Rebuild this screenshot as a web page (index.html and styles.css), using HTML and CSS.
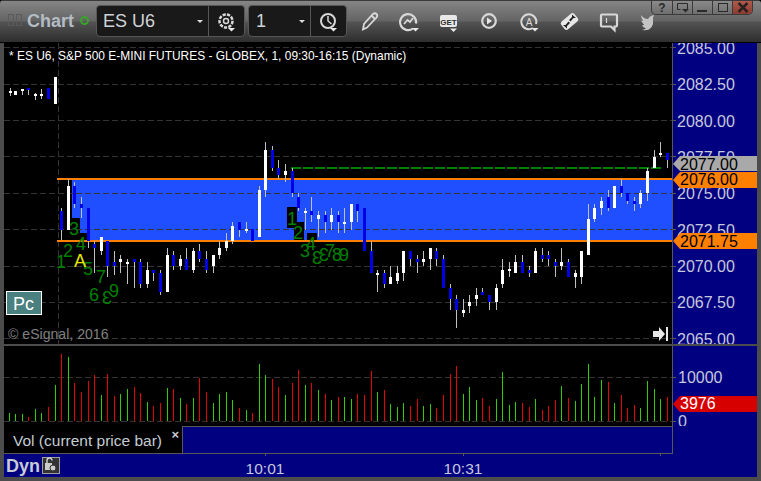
FILE: index.html
```html
<!DOCTYPE html>
<html lang="en">
<head>
<meta charset="utf-8">
<title>Chart</title>
<link rel="stylesheet" href="styles.css">
</head>
<body>
<div class="window">
  <header class="titlebar">
    <div class="handle"><span></span><span></span></div>
    <div class="app-name">Chart</div>
    <div class="status-dot"></div>
    <div class="combo combo-symbol">
      <div class="combo-value">ES U6<i class="caret"></i></div>
      <div class="combo-icon">
        <svg width="36" height="30" viewBox="0 0 36 30"><g class="ic-line"><circle cx="17" cy="15" r="6.5" stroke-width="2.5" stroke-dasharray="3.2 1.2"/><circle cx="17" cy="15" r="2.5" stroke-width="1.5"/></g><path class="ic-fill" d="M19 22h7l-3.500 3.500z"/></svg>
      </div>
    </div>
    <div class="combo combo-interval">
      <div class="combo-value">1<i class="caret"></i></div>
      <div class="combo-icon">
        <svg width="36" height="30" viewBox="0 0 36 30"><g class="ic-line"><circle cx="17" cy="15" r="7" stroke-width="2"/><path d="M17 10v5l3.500 3" stroke-width="1.500"/></g><path class="ic-fill" d="M19 22h7l-3.500 3.500z"/></svg>
      </div>
    </div>
    <div class="tools">
      <svg class="tool" viewBox="0 0 40 30"><path class="ic-line" stroke-width="1.800" d="M14 23.500l1-5.500 9-10q2-1.500 3.500 0t0 3.500l-9.500 10z M22.500 9.500l3.500 3.500"/></svg>
      <svg class="tool" viewBox="0 0 40 30"><path class="ic-line" stroke-width="2.200" d="M24 22.500a8 8 0 1 1 3-5"/><path class="ic-line" stroke-width="1.800" d="M15 18l3.500-4 2.500 2 3-4"/><path class="ic-fill" d="M23 22h7l-3.500 3.500z"/></svg>
      <svg class="tool" viewBox="0 0 40 30"><rect class="ic-fill" x="11" y="9" width="17" height="12" rx="2"/><text class="get-text" x="19.500" y="18.500">GET</text><path class="ic-fill" d="M21 22.500h7l-3.500 3.500z"/></svg>
      <svg class="tool" viewBox="0 0 40 30"><circle class="ic-line" stroke-width="2.200" cx="20" cy="15" r="6.800"/><path class="ic-fill" d="M18 11.500l5 3.500-5 3.500z"/></svg>
      <svg class="tool" viewBox="0 0 40 30"><path class="ic-line" stroke-width="2" d="M24 22a7.500 7.500 0 1 1 3-4"/><text class="a-text" x="20" y="19.500">A</text><path class="ic-fill" d="M22.500 22h7l-3.500 3.500z"/></svg>
      <svg class="tool" viewBox="0 0 40 30"><rect class="ic-fill" x="12" y="10.500" width="17" height="10" rx="2.500" transform="rotate(-40 20.500 15.500)"/><path class="ic-dark" d="M23 8.500l4 3.500h-2.500l-3 3.500-1.500-1.500 3-3zM18 22.500l-4-3.500h2.500l3-3.500 1.500 1.500-3 3z"/></svg>
      <svg class="tool" viewBox="0 0 40 30"><path class="ic-line" stroke-width="2.200" d="M13 8.500h14q1 0 1 1v10q0 1-1 1h-1.500v3.500l-3.500-3.500h-9q-1 0-1-1v-10q0-1 1-1z"/><path class="ic-line" stroke-width="1.200" d="M17.500 12v5"/></svg>
      <svg class="tool tool-bird" viewBox="0 0 40 30"><path class="ic-bird" d="M15 9q3 4 7 4 1-2 3-3l3-1-1 3v6q-1 4-4 5.500-3 1-7 .5 3-.500 4-2-3 0-4-3 2 .500 2-.500-2-2-3-4 1 .500 2 0-2-2-2-5.500z"/></svg>
    </div>
    <div class="win-buttons">
      <div class="win-btn">?</div>
      <div class="win-btn"><svg width="14" height="11" viewBox="0 0 14 11"><path class="wb-line" d="M1.500 1.500h10v6M1.500 1.500v6h3"/><path class="wb-fill" d="M6 7h7l-3.500 3.500z"/></svg></div>
      <div class="win-btn"><svg width="14" height="11" viewBox="0 0 14 11"><path class="wb-fill" d="M1 8h10v2H1z"/></svg></div>
      <div class="win-btn"><svg width="14" height="11" viewBox="0 0 14 11"><rect class="wb-line" x="2.500" y="1.500" width="9" height="8"/></svg></div>
      <div class="win-btn win-close"><svg width="14" height="11" viewBox="0 0 14 11"><path class="wb-x" d="M2.500 1l9 9M11.500 1l-9 9"/></svg></div>
    </div>
  </header>

  <svg class="price-pane" width="753" height="301" viewBox="4 43 753 301">
    <rect class="plot-bg" x="4" y="43" width="668" height="301"/>
    <rect class="axis-bg" x="673" y="43" width="84" height="301"/>
    <rect class="band" x="58" y="178" width="614" height="64"/>
    <path class="mask" d="M58 180h14v38h8v15h7v7H58z"/>
    <path class="grid" d="M4 47.500H672M4 84.500H672M4 120.500H672M4 156.500H672M4 193.500H672M4 229.500H672M4 266.500H672M4 302.500H672M4 338.500H672"/>
    <path class="grid" d="M58.500 43V344"/>
    <path class="band-edge" d="M57 179H672M57 241H672"/>
    <path class="target" d="M291 168H661"/>
    <path class="wick" d="M10.500 88V96M15.500 91V95M22.500 89V95M28.500 88V95M35.500 93V100M41.500 89V99M48.500 88V99M55.500 77V104M61.500 208V240M68.500 179V230M74.500 182V208M81.500 197V218M88.500 208V248M94.500 241V273M101.500 237V255M107.500 241V277M114.500 251V275M120.500 255V273M127.500 259V284M134.500 259V288M140.500 259V288M147.500 262V288M153.500 270V281M160.500 270V295M167.500 248V292M173.500 251V270M180.500 255V270M186.500 248V270M193.500 248V273M199.500 244V262M206.500 251V273M213.500 255V273M219.500 241V259M226.500 233V251M232.500 222V244M239.500 222V237M246.500 222V233M252.500 229V241M259.500 186V237M265.500 142V197M272.500 146V171M278.500 160V179M285.500 164V182M292.500 168V197M298.500 193V211M305.500 208V230M311.500 197V222M318.500 211V237M325.500 211V233M331.500 208V230M338.500 211V233M344.500 208V233M351.500 204V230M357.500 204V222M364.500 208V251M371.500 241V273M377.500 270V292M384.500 270V288M390.500 266V284M397.500 266V284M403.500 251V281M410.500 251V266M417.500 255V273M423.500 251V266M430.500 248V270M436.500 248V266M443.500 255V288M450.500 284V310M456.500 295V328M463.500 299V317M469.500 295V313M476.500 288V306M482.500 288V295M489.500 295V310M496.500 284V310M502.500 259V288M509.500 262V277M515.500 255V273M522.500 255V273M529.500 266V277M535.500 248V273M542.500 248V262M548.500 251V266M555.500 259V277M561.500 248V270M568.500 259V277M575.500 270V288M581.500 251V284M588.500 204V255M594.500 204V222M601.500 197V215M608.500 190V211M614.500 186V208M621.500 179V197M627.500 193V204M634.500 197V211M640.500 190V208M647.500 168V201M654.500 150V168M660.500 142V157M667.500 153V168"/>
    <path class="body-white" d="M10.500 91V93M15.500 91V95M22.500 89V91M35.500 94V96M41.500 94V96M55.500 77V104M68.500 186V230M101.500 237V251M120.500 259V262M127.500 262V264M147.500 270V284M167.500 255V292M180.500 259V266M193.500 251V270M213.500 255V266M219.500 248V255M226.500 241V248M232.500 226V241M246.500 229V231M259.500 190V237M265.500 150V190M285.500 171V175M305.500 211V213M318.500 215V219M331.500 215V222M344.500 222V224M351.500 204V222M377.500 273V275M390.500 277V284M397.500 273V281M403.500 251V273M423.500 259V262M430.500 248V259M463.500 310V313M469.500 302V306M476.500 295V299M496.500 288V302M502.500 270V284M509.500 269V271M515.500 262V273M535.500 251V273M561.500 262V266M575.500 273V277M581.500 251V277M588.500 219V255M594.500 208V219M601.500 201V208M614.500 186V208M640.500 193V204M647.500 171V193M654.500 157V168M660.500 153V155"/>
    <path class="body-blue" d="M28.500 88V90M48.500 88V99M61.500 211V230M74.500 186V204M81.500 204V208M88.500 208V241M94.500 244V248M107.500 241V266M114.500 262V266M134.500 259V262M140.500 262V284M153.500 270V273M160.500 273V292M173.500 255V266M186.500 259V270M199.500 251V259M206.500 259V270M239.500 222V230M252.500 229V241M272.500 150V168M278.500 168V175M292.500 171V193M298.500 197V208M311.500 211V215M325.500 215V222M338.500 215V222M357.500 204V211M364.500 208V251M371.500 251V273M384.500 273V284M410.500 251V259M417.500 259V262M436.500 251V259M443.500 259V288M450.500 288V299M456.500 299V310M482.500 292V295M489.500 295V302M522.500 262V273M529.500 270V273M542.500 255V259M548.500 255V259M555.500 262V266M568.500 262V277M608.500 197V208M621.500 186V193M627.500 193V201M634.500 201V204M667.500 153V160"/>
    <rect class="mask" x="287" y="207" width="10" height="21"/>
    <rect class="mask" x="294" y="222" width="10" height="18"/>
    <rect class="mask" x="307" y="233" width="10" height="7"/>
    <g class="seq">
      <text x="61" y="268">1</text><text x="68" y="257">2</text><text x="74" y="235">3</text><text x="81" y="250">4</text><text x="88" y="275">5</text><text x="101" y="283">7</text><text x="94" y="301">6</text><text transform="translate(107 304) scale(-1 1)">3</text><text x="114" y="297">9</text>
      <text x="292" y="225">1</text><text x="298" y="239">2</text><text x="311" y="250">4</text><text x="305" y="257">3</text><text transform="translate(317 264) scale(-1 1)">3</text><text transform="translate(324 261) scale(-1 1)">3</text><text x="330" y="257">7</text><text x="337" y="261">8</text><text x="344" y="261">9</text>
    </g>
    <text class="signal" x="80" y="267">A</text>
    <text class="study-title" x="9" y="60">* ES U6, S&amp;P 500 E-MINI FUTURES - GLOBEX, 1, 09:30-16:15 (Dynamic)</text>
    <rect class="pc-box" x="6.500" y="291.500" width="35" height="23"/>
    <text class="pc-text" x="13" y="310">Pc</text>
    <text class="copyright" x="8" y="339">© eSignal, 2016</text>
    <path class="go-icon" d="M653 331h6v-4l6 7-6 7v-4h-6zM666 327h2v14h-2z"/>
    <path class="axis-line" d="M672.500 43V344"/>
    <path class="axis-line" d="M673 47.500h3M673 84.500h3M673 120.500h3M673 156.500h3M673 193.500h3M673 229.500h3M673 266.500h3M673 302.500h3M673 338.500h3"/>
    <g class="axis-text">
      <text x="677" y="54">2085.00</text><text x="677" y="90">2082.50</text><text x="677" y="127">2080.00</text><text x="677" y="163">2077.50</text><text x="677" y="199">2075.00</text><text x="677" y="236">2072.50</text><text x="677" y="272">2070.00</text><text x="677" y="308">2067.50</text><text x="677" y="345">2065.00</text>
    </g>
    <path class="tag-grey" d="M673 164l7-8h77v15h-77z"/>
    <path class="tag-orange" d="M673 180l7-8h77v16h-77z"/>
    <path class="tag-orange" d="M673 241l7-8h77v16h-77z"/>
    <g class="tag-text">
      <text x="680" y="170">2077.00</text><text x="680" y="185">2076.00</text><text x="680" y="247">2071.75</text>
    </g>
  </svg>

  <div class="pane-sep"></div>

  <svg class="vol-pane" width="753" height="80" viewBox="4 346 753 80">
    <rect class="plot-bg" x="4" y="346" width="668" height="80"/>
    <rect class="axis-bg" x="673" y="346" width="84" height="80"/>
    <path class="grid" d="M4 377.500H672M4 421.500H672"/>
    <path class="vol-green" d="M9.500 413V421M15.500 414V421M22.500 414V421M35.500 409V421M41.500 413V421M55.500 385V421M68.500 357V421M101.500 395V421M120.500 394V421M127.500 389V421M147.500 402V421M167.500 388V421M180.500 398V421M193.500 398V421M213.500 403V421M219.500 394V421M226.500 392V421M232.500 400V421M246.500 410V421M259.500 364V421M265.500 375V421M285.500 395V421M305.500 385V421M318.500 390V421M331.500 400V421M344.500 397V421M351.500 399V421M377.500 392V421M390.500 404V421M397.500 407V421M403.500 403V421M423.500 406V421M430.500 404V421M463.500 394V421M469.500 387V421M476.500 400V421M496.500 399V421M502.500 372V421M509.500 405V421M515.500 402V421M535.500 399V421M561.500 386V421M575.500 401V421M581.500 384V421M588.500 364V421M594.500 397V421M601.500 380V421M614.500 403V421M640.500 408V421M647.500 381V421M654.500 389V421M660.500 399V421"/>
    <path class="vol-red" d="M28.500 417V421M48.500 407V421M61.500 354V421M74.500 383V421M81.500 392V421M88.500 381V421M94.500 375V421M107.500 374V421M114.500 396V421M134.500 387V421M140.500 393V421M153.500 406V421M160.500 403V421M173.500 389V421M186.500 404V421M199.500 378V421M206.500 392V421M239.500 408V421M252.500 413V421M272.500 379V421M278.500 387V421M292.500 383V421M298.500 370V421M311.500 383V421M325.500 394V421M338.500 397V421M357.500 394V421M364.500 395V421M371.500 371V421M384.500 390V421M410.500 406V421M417.500 399V421M436.500 408V421M443.500 395V421M450.500 374V421M456.500 366V421M482.500 398V421M489.500 406V421M522.500 403V421M529.500 407V421M542.500 410V421M548.500 406V421M555.500 400V421M568.500 398V421M608.500 382V421M621.500 395V421M627.500 408V421M634.500 405V421M667.500 397V421"/>
    <path class="axis-line" d="M672.500 346V426M673 377.500h3M673 421.500h3"/>
    <g class="axis-text">
      <text x="678" y="383">10000</text><text x="678" y="427">0</text>
    </g>
    <path class="tag-red" d="M673 404l7-8h77v16h-77z"/>
    <text class="tag-red-text" x="680" y="409">3976</text>
  </svg>

  <div class="legend-row">
    <div class="legend">Vol (current price bar)<span class="legend-close">×</span></div>
    <div class="legend-fill"></div>
    <div class="legend-axis"></div>
  </div>

  <svg class="time-row" width="753" height="23" viewBox="4 454 753 23">
    <rect class="axis-bg" x="4" y="454" width="753" height="23"/>
    <path class="axis-line" d="M265.500 454v2M463.500 454v2M660.500 454v2"/>
    <text class="dyn" x="6" y="472">Dyn</text>
    <rect class="lock-box" x="42.500" y="457.500" width="17" height="16"/>
    <path class="lock-shackle" d="M47 463v-2.500a2.500 2.500 0 0 1 5 0"/>
    <path class="lock-body" d="M45 463h7v7h-7z"/>
    <circle class="lock-clock" cx="53" cy="468" r="3"/>
    <text class="time-text" x="265" y="474">10:01</text>
    <text class="time-text" x="463" y="474">10:31</text>
  </svg>
</div>
</body>
</html>
```
FILE: styles.css
```css
* { box-sizing: border-box; }
html, body { margin: 0; padding: 0; background: #000; overflow: hidden; }
body { font-family: "Liberation Sans", Arial, sans-serif; }
svg { display: block; }

.window {
  position: relative;
  width: 761px;
  height: 481px;
  padding: 0 4px 4px;
  background: #4c4c4c;
  border-radius: 4px 4px 0 0;
  overflow: hidden;
}

.titlebar {
  display: flex;
  align-items: flex-start;
  height: 43px;
  margin: 0 -4px;
  padding: 5px 0 0 8px;
  border-top: 1px solid #3a3a3a;
  border-bottom: 1px solid #000;
  background: linear-gradient(#858585 0, #646464 20px, #535353 21px, #2c2c2c 42px);
}

.handle { display: flex; gap: 2px; margin-top: 8px; width: 19px; }
.handle span { width: 6px; height: 12px; border: 1px solid #5b5b5b; }

.app-name {
  margin-top: 3px;
  width: 53px;
  font-size: 18px;
  font-weight: bold;
  line-height: 24px;
  color: #b4bcc4;
}

.status-dot {
  flex: none;
  width: 9px;
  height: 9px;
  margin-top: 10px;
  border: 2px solid #38a428;
  border-radius: 50%;
}

.combo {
  display: flex;
  flex: none;
  height: 32px;
  margin-top: -1px;
  border: 1px solid #565656;
  border-radius: 4px;
  background: #191919;
  color: #cfd3d8;
}
.combo-symbol { width: 149px; margin-left: 7px; }
.combo-interval { width: 99px; margin-left: 3px; }
.combo-value {
  position: relative;
  flex: 1;
  padding-left: 6px;
  font-size: 18px;
  line-height: 30px;
}
.combo-interval .combo-value { padding-left: 7px; }
.caret {
  position: absolute;
  right: 5px;
  top: 14px;
  border-style: solid;
  border-width: 3px 3px 0;
  border-color: #ddd transparent transparent;
}
.combo-icon { width: 36px; border-left: 1px solid #565656; }

.tools { display: flex; margin-left: 2px; }
.tool { flex: none; width: 40px; height: 30px; }
.tool-bird { margin-left: -3px; }

.ic-line { fill: none; stroke: #d8d8d8; }
.ic-fill { fill: #e8e8e8; }
.ic-dark { fill: #222; }
.ic-bird { fill: #c4c4c4; }
.get-text { font: bold 8px "Liberation Sans", sans-serif; fill: #333; text-anchor: middle; }
.a-text { font: 10px "Liberation Sans", sans-serif; fill: #ddd; text-anchor: middle; }

.win-buttons {
  position: absolute;
  top: 1px;
  left: 651px;
  display: flex;
  height: 14px;
  border: 1px solid #3a3a3a;
  border-top: 0;
  border-radius: 0 0 5px 5px;
  overflow: hidden;
  background: linear-gradient(#8a8a8a, #6e6e6e);
}
.win-btn {
  display: flex;
  align-items: center;
  justify-content: center;
  width: 20px;
  font-size: 12px;
  font-weight: bold;
  color: #2a2a2a;
  border-left: 1px solid #3a3a3a;
}
.win-btn:first-child { border-left: 0; }
.win-close { background: linear-gradient(#b05a4c, #8c3c30); }
.wb-line { fill: none; stroke: #2a2a2a; stroke-width: 1; }
.wb-fill { fill: #2a2a2a; }
.wb-x { fill: none; stroke: #2a2020; stroke-width: 2.500; }

.plot-bg { fill: #000; }
.axis-bg { fill: #000080; }
.band { fill: #1f4fff; }
.mask { fill: #000; }
.grid { fill: none; stroke: #333; stroke-dasharray: 6 3; shape-rendering: crispEdges; }
.band-edge { fill: none; stroke: #ff8000; stroke-width: 2; shape-rendering: crispEdges; }
.target { fill: none; stroke: #008000; stroke-width: 2; stroke-dasharray: 10 2; shape-rendering: crispEdges; }
.wick { fill: none; stroke: #c0c0c0; shape-rendering: crispEdges; }
.body-white { fill: none; stroke: #fff; stroke-width: 3; shape-rendering: crispEdges; }
.body-blue { fill: none; stroke: #0000e6; stroke-width: 3; shape-rendering: crispEdges; }
.seq text { font-size: 18px; fill: #008000; text-anchor: middle; }
.signal { font-size: 18px; fill: #e6e600; text-anchor: middle; }
.study-title { font-size: 11.940px; fill: #fff; }
.pc-box { fill: #4a8080; stroke: #fff; }
.pc-text { font-size: 18px; fill: #fff; }
.copyright { font-size: 14.100px; fill: #808080; }
.go-icon { fill: #e8e8e8; }
.axis-line { fill: none; stroke: #585858; shape-rendering: crispEdges; }
.axis-text text { font-size: 16px; fill: #c6c8dc; }
.tag-grey { fill: #a9a9a9; }
.tag-orange { fill: #ff8000; }
.tag-text text { font-size: 16px; fill: #000; }
.tag-red { fill: #d60000; }
.tag-red-text { font-size: 16px; fill: #fff; }
.vol-green { fill: none; stroke: #33cc00; shape-rendering: crispEdges; }
.vol-red { fill: none; stroke: #e60000; shape-rendering: crispEdges; }

.pane-sep { height: 2px; background: #4c4c4c; }

.legend-row { display: flex; height: 28px; }
.legend {
  position: relative;
  width: 178px;
  padding: 5px 0 0 9px;
  background: #000;
  font-size: 15.500px;
  line-height: 20px;
  color: #c4ccd4;
  border-bottom: 1px solid #585858;
}
.legend-close {
  position: absolute;
  top: -1px;
  right: 3px;
  font-size: 13px;
  font-weight: bold;
  color: #ccc;
}
.legend-fill {
  width: 491px;
  background: #000080;
  border: 1px solid #585858;
}
.legend-axis { width: 84px; background: #000080; }

.dyn { font-size: 18px; font-weight: bold; fill: #c8ccd4; }
.lock-box { fill: #333; stroke: #a0a0a0; }
.lock-shackle { fill: none; stroke: #ccc; stroke-width: 1.500; }
.lock-body { fill: #ccc; }
.lock-clock { fill: #ccc; stroke: #333; }
.time-text { font-size: 15.500px; fill: #c6c8dc; text-anchor: middle; }
```
